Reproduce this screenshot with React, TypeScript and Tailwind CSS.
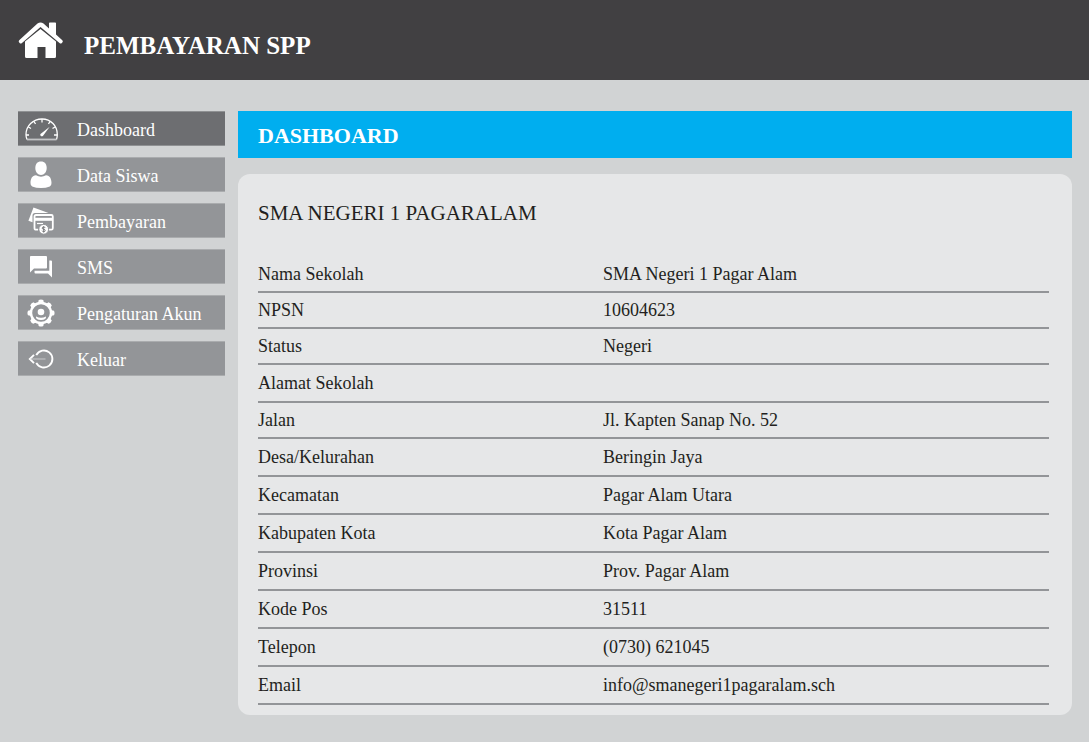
import type { ReactNode } from "react";

function HomeIcon() {
  return (
    <svg viewBox="0 0 46 38" className="h-[38px] w-[46px] shrink-0" fill="#fff" aria-hidden="true">
      <path d="M7 20.500 22.500 8 38 20.500V35.500q0 1.500-1.500 1.500H27.500V26H19.500V37H8.500Q7 37 7 35.500Z" />
      <path d="M1.200 19.200 19.500 2.600Q22.500.2 25.500 2.600L31 7.400V2.200Q31 1.400 31.800 1.400H37.200Q38 1.400 38 2.200V13.500L44.300 19.200Q45.300 20.200 44.500 21.200L43.600 22.200Q42.700 23 41.800 22.200L22.500 6 3.700 22.200Q2.700 23 1.900 22.200L1 21.200Q.3 20 1.200 19.200Z" />
    </svg>
  );
}

function GaugeIcon() {
  return (
    <svg viewBox="0 0 34 24" className="h-6 w-[34px]" fill="none" stroke="#fff" strokeWidth="1.300" aria-hidden="true">
      <path d="M3 22.500Q2 20.500 2 17.500C2 9 9 2 18 2S33.300 9 33.300 17.500Q33.300 20.500 32.500 22.500" />
      <path d="M3 22.500H32.500" stroke="#c4c5c7" strokeWidth="1.800" />
      <path d="M18 2V5.500M10 4.500 11.500 7M26 4.500 24.500 7M4.500 10 7 11.500M31 10 28.500 11.500M2 18H5M33.300 18H30" />
      <path d="M16.500 16.900 25.700 9.700 18.900 18.900Q17.500 19.800 16.700 18.800 15.800 17.800 16.500 16.900Z" fill="#fff" stroke="none" />
    </svg>
  );
}

function PersonIcon() {
  return (
    <svg viewBox="0 0 22 28" className="h-7 w-[22px]" fill="#fff" aria-hidden="true">
      <path d="M11 .5C14.800.5 16.700 3.200 16.700 7S14.200 14 11 14 5.300 10.800 5.300 7 7.200.5 11 .5Z" />
      <path d="M6 14.300Q11 17 16 14.300C20 14.800 21.300 17.500 21.500 22Q21.600 24.500 19.800 25.500 16 27 11 27T2.200 25.500Q.4 24.500.5 22C.7 17.500 2 14.800 6 14.300Z" />
    </svg>
  );
}

function CardsIcon() {
  return (
    <svg viewBox="0 0 26 28" className="h-7 w-[26px]" fill="none" stroke="#fff" aria-hidden="true">
      <path d="M5.500.5 20.500 6H7Q4.500 6 4.500 8.500V15.300L.4 13.800Z" fill="#fff" stroke="none" />
      <path d="M10 22.700H8Q6.500 22.700 6.500 21.200V9.500Q6.500 8 8 8H23.300Q24.800 8 24.800 9.500V21.200Q24.800 22.700 23.300 22.700H21" strokeWidth="1.800" />
      <path d="M6.500 12.300H24.800" strokeWidth="3" />
      <path d="M9 16.500H15" strokeWidth="1.200" />
      <circle cx="15.700" cy="22.300" r="4.900" fill="#fff" stroke="#939598" strokeWidth="1" />
      <path d="M17.200 20.900Q16.800 20 15.700 20 14.200 20 14.200 21.100T15.700 22.300 17.200 23.500 15.700 24.700Q14.500 24.700 14.100 23.700M15.700 19.200V25.500" stroke="#6d6e71" strokeWidth=".9" />
    </svg>
  );
}

function ChatIcon() {
  return (
    <svg viewBox="0 0 24 24" className="h-6 w-6" fill="#fff" aria-hidden="true">
      <path d="M1.800 1H17Q18 1 18 2V12.500Q18 13.500 17 13.500H5L1 17.500V2Q1 1 1.800 1Z" />
      <path d="M20.300 5.500H22Q23 5.500 23 6.500V22.500L19 18.500H6.500Q5.500 18.500 5.500 17.500V15.700H20.300Z" />
    </svg>
  );
}

const TEETH = [0, 45, 90, 135, 180, 225, 270, 315];

function GearIcon() {
  return (
    <svg viewBox="0 0 28 28" className="h-7 w-7" fill="#fff" aria-hidden="true">
      {TEETH.map((angle) => (
        <path key={angle} d="M10 5Q11.600 3.500 11.700 1Q14-.1 16.300 1 16.400 3.500 18 5Z" transform={`rotate(${angle} 14 14)`} />
      ))}
      <circle cx="14" cy="14" r="10" fill="none" stroke="#fff" strokeWidth="2.400" />
      <circle cx="14" cy="13" r="3.300" />
      <path d="M9 17.500Q14 20 19 17.500 19.600 20.800 14 20.900 8.400 20.800 9 17.500Z" />
    </svg>
  );
}

function LogoutIcon() {
  return (
    <svg viewBox="0 0 26 20" className="h-5 w-[26px]" fill="none" stroke="#fff" strokeWidth="1.900" aria-hidden="true">
      <path d="M8.300 6.200A8.500 8.500 0 1 1 8.300 13.800" />
      <path d="M6 5.800 1.800 10 6 14.200" />
      <path d="M2.500 10H17.500" strokeWidth="1" stroke="#c9cacc" />
    </svg>
  );
}

const MENU: { label: string; icon: ReactNode }[] = [
  { label: "Dashboard", icon: <GaugeIcon /> },
  { label: "Data Siswa", icon: <PersonIcon /> },
  { label: "Pembayaran", icon: <CardsIcon /> },
  { label: "SMS", icon: <ChatIcon /> },
  { label: "Pengaturan Akun", icon: <GearIcon /> },
  { label: "Keluar", icon: <LogoutIcon /> },
];

const ROWS: { label: string; value: string; height: string }[] = [
  { label: "Nama Sekolah", value: "SMA Negeri 1 Pagar Alam", height: "h-9" },
  { label: "NPSN", value: "10604623", height: "h-9" },
  { label: "Status", value: "Negeri", height: "h-9" },
  { label: "Alamat Sekolah", value: "", height: "h-[38px]" },
  { label: "Jalan", value: "Jl. Kapten Sanap No. 52", height: "h-9" },
  { label: "Desa/Kelurahan", value: "Beringin Jaya", height: "h-[38px]" },
  { label: "Kecamatan", value: "Pagar Alam Utara", height: "h-[38px]" },
  { label: "Kabupaten Kota", value: "Kota Pagar Alam", height: "h-[38px]" },
  { label: "Provinsi", value: "Prov. Pagar Alam", height: "h-[38px]" },
  { label: "Kode Pos", value: "31511", height: "h-[38px]" },
  { label: "Telepon", value: "(0730) 621045", height: "h-[38px]" },
  { label: "Email", value: "info@smanegeri1pagaralam.sch", height: "h-[38px]" },
];

export default function App() {
  return (
    <div className="min-h-screen bg-[#d1d3d4] font-['Liberation_Serif',serif] text-[#231f20]">
      <header className="flex h-20 items-center gap-5 bg-[#414042] px-[18px] text-white">
        <HomeIcon />
        <h1 className="pt-3 text-[25px] leading-8 font-bold">PEMBAYARAN SPP</h1>
      </header>

      <div className="flex items-start gap-[13px] pt-[31px] pr-[17px] pb-7 pl-[18px]">
        <nav className="w-[207px] shrink-0" aria-label="Menu">
          <ul className="flex flex-col gap-[11px]">
            {MENU.map((item, index) => (
              <li key={item.label}>
                <a
                  href="#"
                  aria-current={index === 0 ? "page" : undefined}
                  className={`flex h-[35px] items-center border-y text-lg text-white ${
                    index === 0 ? "border-[#8f9193] bg-[#6d6e71]" : "border-[#aaacae] bg-[#939598]"
                  }`}
                >
                  <span className="flex w-[46px] justify-center">{item.icon}</span>
                  <span className="pt-0.5 pl-[13px] leading-6">{item.label}</span>
                </a>
              </li>
            ))}
          </ul>
        </nav>

        <main className="min-w-0 flex-1">
          <h2 className="flex h-[47px] items-center bg-[#00aeef] px-5 pt-[2px] text-[22px] font-bold text-white">
            DASHBOARD
          </h2>
          <section className="mt-4 rounded-xl bg-[#e6e7e8] pt-[23px] pr-[23px] pb-2.5 pl-5">
            <h3 className="text-[21px] leading-8">SMA NEGERI 1 PAGARALAM</h3>
            <table className="mt-[27px] w-full table-fixed border-collapse text-left text-lg leading-6">
              <tbody>
                {ROWS.map((row) => (
                  <tr key={row.label} className={`${row.height} border-b-2 border-[#939598]`}>
                    <th scope="row" className="w-[345px] p-0 font-normal">
                      {row.label}
                    </th>
                    <td className="p-0">{row.value}</td>
                  </tr>
                ))}
              </tbody>
            </table>
          </section>
        </main>
      </div>
    </div>
  );
}
